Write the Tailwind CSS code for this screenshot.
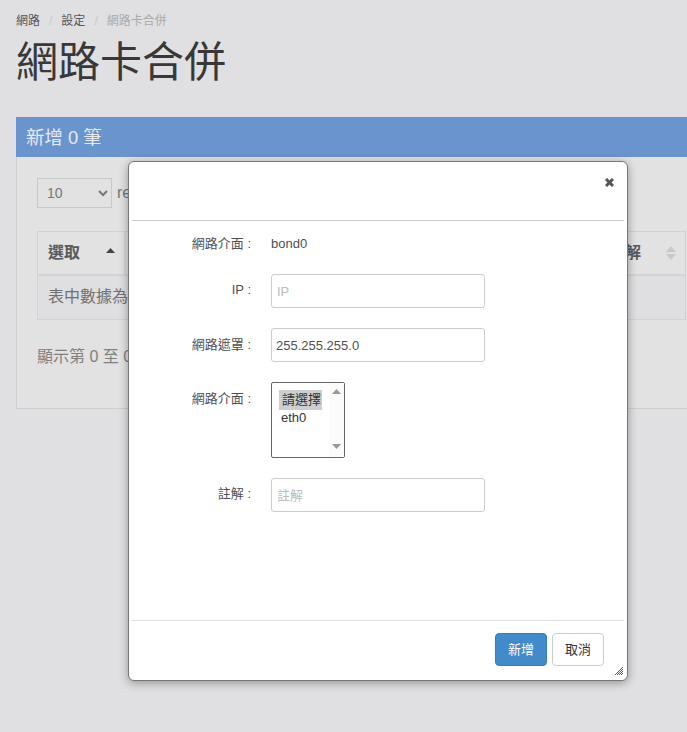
<!DOCTYPE html>
<html lang="zh-TW">
<head>
<meta charset="utf-8">
<script src="https://cdn.jsdelivr.net/npm/@tailwindcss/browser@4"></script>
</head>
<body class="relative w-[687px] h-[732px] overflow-hidden bg-[#e0e0e2] text-[#333] font-['Liberation_Sans','Noto_Sans_CJK_TC',sans-serif] text-[13px]">
<div class="pl-4">
  <nav class="flex items-center h-[17px] mt-3 text-[12px] text-[#555]">
    <span>網路</span><span class="mx-[9px] text-[#c8c8c9]">/</span><span>設定</span><span class="mx-[9px] text-[#c8c8c9]">/</span><span class="text-[#aaa]">網路卡合併</span>
  </nav>
  <h1 class="text-[42px] leading-[60px] mt-[4px] font-normal text-[#383838]">網路卡合併</h1>
  <section class="mt-[24px] w-[700px] h-[292px] border border-[#cfcfd1] bg-[#e2e2e3]">
    <div class="h-[40px] -mt-px -mx-px bg-[#6a94cd] text-[#e6ebf2] text-[18.4px] leading-[41px] pl-[10px]">新增 0 筆</div>
    <div class="pl-5 pt-[21px]">
      <div class="flex items-center gap-[5px]">
        <select class="w-[75px] h-[30px] border border-[#c8c8c9] bg-[#e2e2e3] text-[#777] text-[14px] pl-[5px]"><option>10</option></select>
        <span class="text-[16px] text-[#777]">records</span>
      </div>
      <div class="mt-[23px] w-[649px] border border-[#d2d2d3]">
        <div class="flex justify-between h-[44px] border-b-2 border-[#d4d4d5] text-[#5a5a5a]">
          <div class="flex items-center justify-between w-[88px] pl-[10px] pr-[9px] border-r-2 border-[#d6d6d7] font-bold text-[16px]">選取
            <svg class="mb-[5px]" width="9" height="5" viewBox="0 0 9 5"><path d="M4.5 0L9 5H0z" fill="#444"/></svg>
          </div>
          <div class="flex items-center gap-[25px] pr-[9px] font-bold text-[16px]">註解
            <svg width="10" height="14" viewBox="0 0 10 14"><path d="M5 0L10 6H0zM5 14L0 8H10z" fill="#c9c9ca"/></svg>
          </div>
        </div>
        <div class="h-[43px] pl-[10px] bg-[#dfdfe1] text-[16px] leading-[42px] text-[#707070]">表中數據為空</div>
      </div>
      <p class="mt-[25px] text-[16px] text-[#808080]">顯示第 0 至 0 項結果</p>
    </div>
  </section>
</div>

<div class="absolute left-[128px] top-[161px] w-[500px] h-[520px] bg-white border border-[#777] rounded-[6px] shadow-[0_2px_10px_rgba(0,0,0,0.35)] px-[3px] flex flex-col">
  <div class="relative h-[59px] border-b border-[#ccc] flex justify-end shrink-0">
    <svg class="mt-[16px] mr-[10px]" width="9" height="9" viewBox="0 0 9 9"><path d="M1 1L8 8M8 1L1 8" stroke="#555" stroke-width="3"/></svg>
  </div>
  <form class="pt-[13px] flex flex-col text-[#505050]">
    <div class="flex h-[20px]">
      <label class="w-[119px] text-right leading-[20px]">網路介面 :</label>
      <span class="ml-[20px] leading-[20px]">bond0</span>
    </div>
    <div class="flex mt-[20px] h-[34px]">
      <label class="w-[119px] text-right leading-[32px]">IP :</label>
      <input class="ml-[20px] w-[214px] h-[34px] border border-[#ccc] rounded-[3px] pl-[5px] pr-[4px] text-[13px] placeholder:text-[#bbb]" placeholder="IP">
    </div>
    <div class="flex mt-[20px] h-[34px]">
      <label class="w-[119px] text-right leading-[34px]">網路遮罩 :</label>
      <input class="ml-[20px] w-[214px] h-[34px] border border-[#ccc] rounded-[3px] px-[4px] text-[13px] text-[#505050]" value="255.255.255.0">
    </div>
    <div class="flex mt-[20px] h-[76px]">
      <label class="w-[119px] text-right leading-[34px]">網路介面 :</label>
      <div class="ml-[20px] w-[74px] h-[76px] border border-[#666] rounded-[2px] flex justify-between">
        <div class="pl-[7px] pt-[7px] text-[13px] text-[#333] leading-[20px]">
          <div class="bg-[#cecece] pl-[3px] pr-[1px]">請選擇</div>
          <div class="px-[2px] leading-[16px]">eth0</div>
        </div>
        <div class="w-[15px] bg-[#fbfbfb] flex flex-col justify-between items-center pt-[6px] pb-[8px]">
          <svg width="9" height="5" viewBox="0 0 9 5"><path d="M4.5 0L9 5H0z" fill="#999"/></svg>
          <svg width="9" height="5" viewBox="0 0 9 5"><path d="M0 0H9L4.5 5z" fill="#999"/></svg>
        </div>
      </div>
    </div>
    <div class="flex mt-[20px] h-[34px]">
      <label class="w-[119px] text-right leading-[32px]">註解 :</label>
      <input class="ml-[20px] w-[214px] h-[34px] border border-[#ccc] rounded-[3px] pl-[5px] pr-[4px] text-[13px] placeholder:text-[#bbb]" placeholder="註解">
    </div>
  </form>
  <div class="mt-auto h-[60px] border-t border-[#ddd] flex justify-end gap-[5px] pt-[12px] pr-[20px] shrink-0">
    <button class="w-[52px] h-[33px] rounded-[4px] bg-[#428bca] border border-[#357ebd] text-white text-[13px]">新增</button>
    <button class="w-[52px] h-[33px] rounded-[4px] bg-white border border-[#ccc] text-[#333] text-[13px]">取消</button>
  </div>
  <svg class="absolute right-[4px] bottom-[5px]" width="8" height="8" viewBox="0 0 8 8"><path d="M0 8L8 0M2 8L8 2M4 8L8 4M6 8L8 6" stroke="#444" stroke-width="0.9"/></svg>
</div>
</body>
</html>
